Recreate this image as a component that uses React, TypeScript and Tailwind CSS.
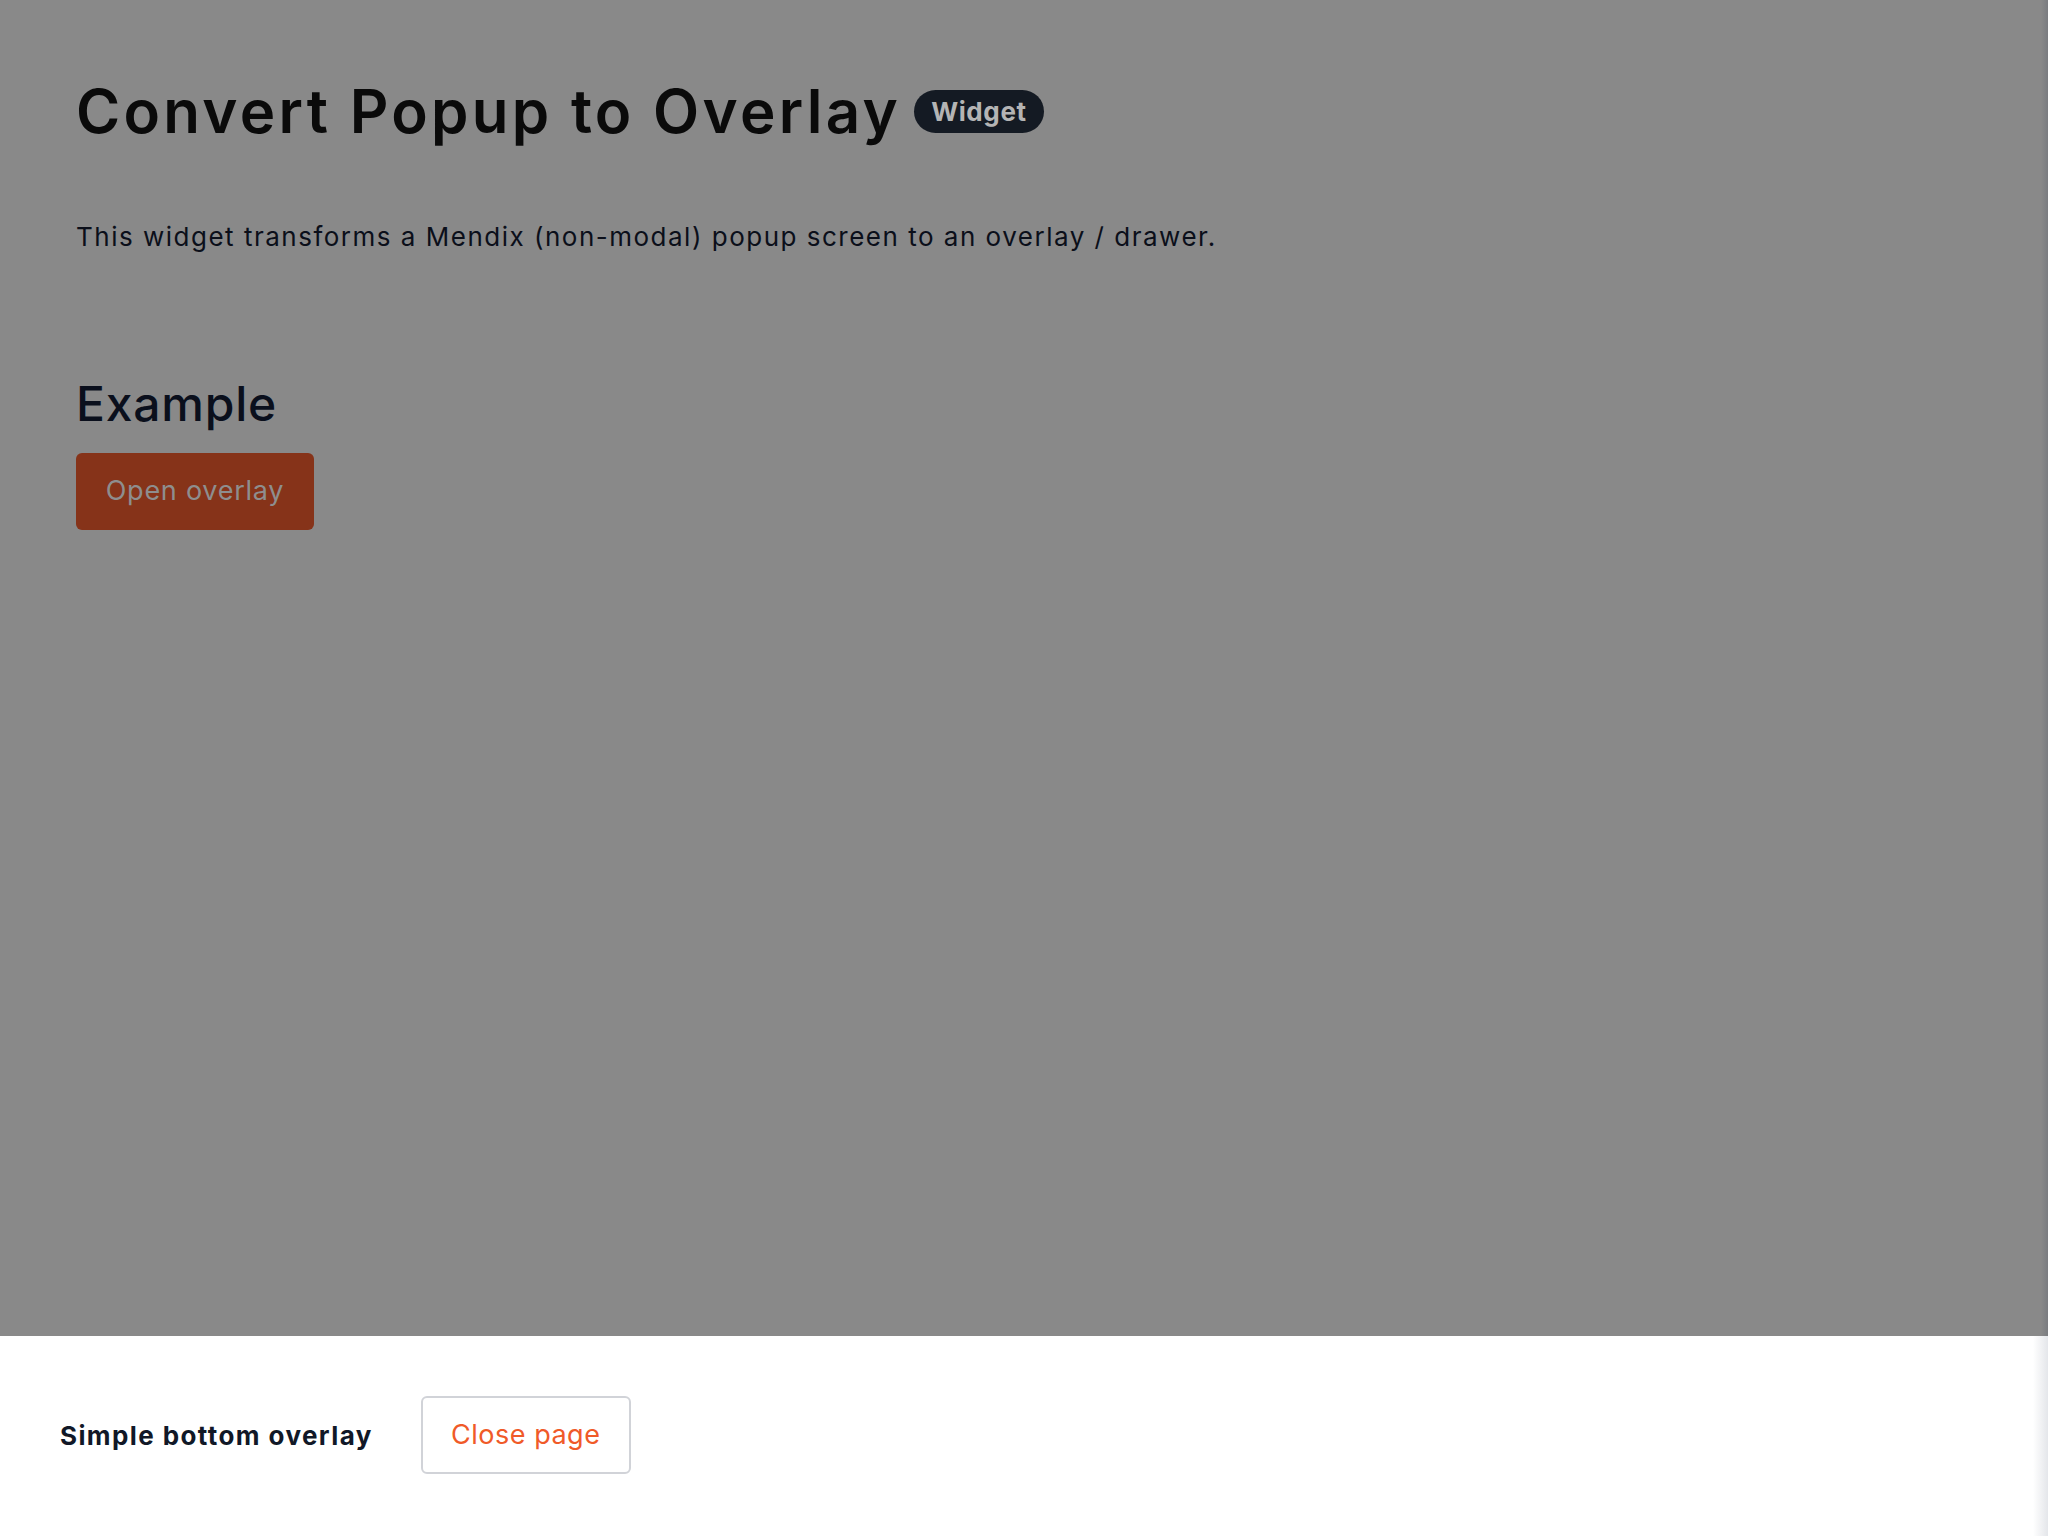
import React from "react";

const body = { fontFamily: "Inter, 'Open Sans', sans-serif" };
const head = { fontFamily: "Inter, 'Noto Sans', sans-serif" };

export default function App() {
  return (
    <div className="relative w-[2048px] h-[1536px] overflow-hidden bg-[#898989]" style={body}>
      <main className="pl-[76px] pt-[73px]">
        <div className="flex items-center gap-[13px]">
          <h1 className="text-[60px] leading-[76px] font-semibold tracking-[3.3px] text-[#0a0a0a]" style={head}>
            Convert Popup to Overlay
          </h1>
          <span className="flex h-[43px] items-center rounded-full bg-[#141a23] px-[17px] text-[26px] font-bold tracking-[0.6px] text-[#b4b4b4]">
            Widget
          </span>
        </div>
        <p className="mt-[70px] text-[26px] leading-[36px] tracking-[1.5px] text-[#0b0f1a]">
          This widget transforms a Mendix (non-modal) popup screen to an overlay / drawer.
        </p>
        <h2 className="mt-[121px] text-[48px] leading-[56px] font-medium tracking-[0.8px] text-[#0a0f1c]">Example</h2>
        <button className="mt-[21px] flex h-[77px] w-[238px] items-center justify-center rounded-[6px] bg-[#863319] text-[27px] tracking-[0.75px] text-[#8e8e8e]">
          Open overlay
        </button>
      </main>

      <div className="absolute top-0 right-0 h-full w-[7px] bg-gradient-to-r from-transparent to-[#7a7c80]" />

      <div className="absolute bottom-0 left-0 right-0 flex h-[200px] items-center bg-white pl-[60px]">
        <span className="-mt-[2px] text-[26px] font-bold tracking-[1.4px] text-[#111827]">Simple bottom overlay</span>
        <button className="ml-[48px] -mt-[2px] flex h-[78px] w-[210px] items-center justify-center rounded-[6px] border-2 border-[#d1d3d8] bg-white text-[27px] tracking-[0.5px] text-[#f05a28]">
          Close page
        </button>
        <div className="absolute top-0 right-0 h-full w-[15px] bg-gradient-to-r from-transparent to-[#e4e6ea]" />
      </div>
    </div>
  );
}
